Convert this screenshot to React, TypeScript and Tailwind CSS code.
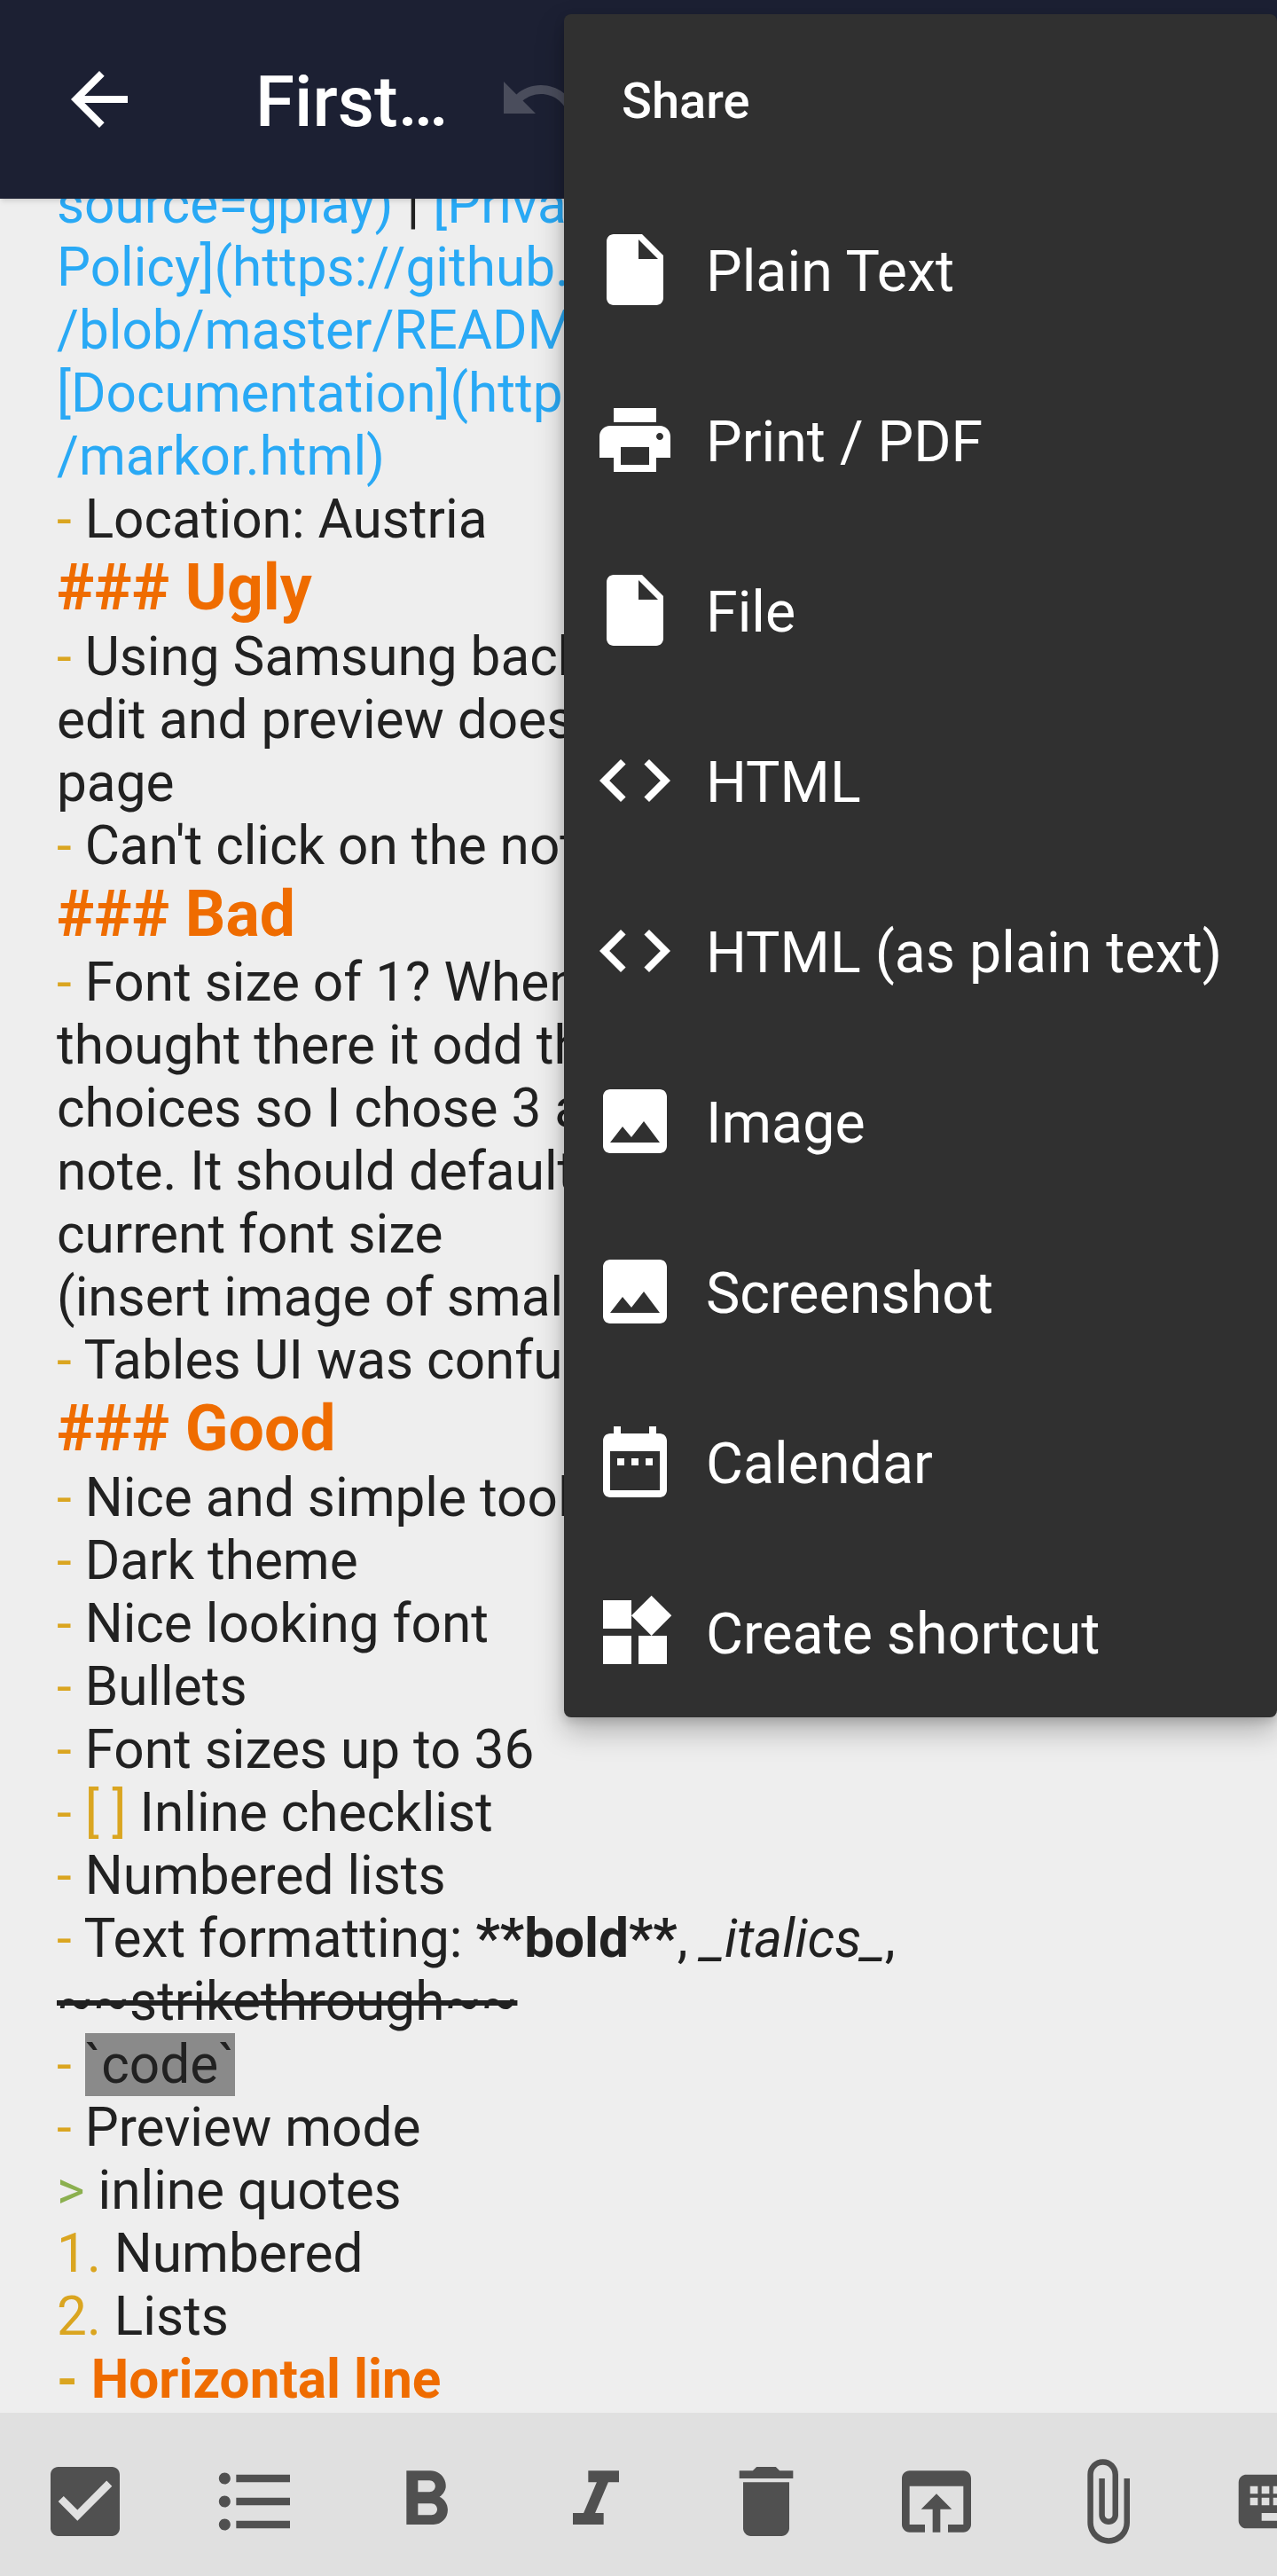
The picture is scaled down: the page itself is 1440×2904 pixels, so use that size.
import React from "react";

const ROBOTO = "font-['Roboto',sans-serif]";

// Material icon paths, all on a 24 unit grid
const icons = {
  back: "M20 11H7.83l5.59-5.59L12 4l-8 8 8 8 1.41-1.41L7.83 13H20v-2z",
  undo: "M12.5 8c-2.65 0-5.05.99-6.9 2.6L2 7v9h9l-3.62-3.62c1.39-1.16 3.16-1.88 5.12-1.88 3.54 0 6.55 2.31 7.6 5.5l2.37-.78C21.08 11.03 17.15 8 12.5 8z",
  file: "M6 2c-1.1 0-1.99.9-1.99 2L4 20c0 1.1.89 2 1.99 2H18c1.1 0 2-.9 2-2V8l-6-6H6zm7 7V3.5L18.5 9H13z",
  print: "M19 8H5c-1.66 0-3 1.34-3 3v6h4v4h12v-4h4v-6c0-1.66-1.34-3-3-3zm-3 11H8v-5h8v5zm3-7c-.55 0-1-.45-1-1s.45-1 1-1 1 .45 1 1-.45 1-1 1zm-1-9H6v4h12V3z",
  code: "M9.4 16.6L4.8 12l4.6-4.6L8 6l-6 6 6 6 1.4-1.4zm5.2 0l4.6-4.6-4.6-4.6L16 6l6 6-6 6-1.4-1.4z",
  image: "M21 19V5c0-1.1-.9-2-2-2H5c-1.1 0-2 .9-2 2v14c0 1.1.9 2 2 2h14c1.1 0 2-.9 2-2zM8.5 13.5l2.5 3.01L14.5 12l4.5 6H5l3.5-4.5z",
  calendar: "M9 11H7v2h2v-2zm4 0h-2v2h2v-2zm4 0h-2v2h2v-2zm2-7h-1V2h-2v2H8V2H6v2H5c-1.11 0-1.99.9-1.99 2L3 20c0 1.1.89 2 2 2h14c1.1 0 2-.9 2-2V6c0-1.1-.9-2-2-2zm0 16H5V9h14v11z",
  widgets: "M13 13v8h8v-8h-8zM3 21h8v-8H3v8zM3 3v8h8V3H3zm13.66-1.31L11 7.34 16.66 13l5.66-5.66-5.66-5.65z",
  checkBox: "M19 3H5c-1.11 0-2 .9-2 2v14c0 1.1.89 2 2 2h14c1.11 0 2-.9 2-2V5c0-1.1-.89-2-2-2zm-9 14l-5-5 1.41-1.41L10 14.17l7.59-7.59L19 8l-9 9z",
  list: "M4 10.5c-.83 0-1.5.67-1.5 1.5s.67 1.5 1.5 1.5 1.5-.67 1.5-1.5-.67-1.5-1.5-1.5zm0-6c-.83 0-1.5.67-1.5 1.5S3.17 7.5 4 7.5 5.5 6.83 5.5 6 4.83 4.5 4 4.5zm0 12c-.83 0-1.5.68-1.5 1.5s.68 1.5 1.5 1.5 1.5-.68 1.5-1.5-.67-1.5-1.5-1.5zM7 19h14v-2H7v2zm0-6h14v-2H7v2zm0-8v2h14V5H7z",
  bold: "M15.6 10.79c.97-.67 1.65-1.77 1.65-2.79 0-2.26-1.75-4-4-4H7v14h7.04c2.09 0 3.71-1.7 3.71-3.79 0-1.52-.86-2.82-2.15-3.42zM10 6.5h3c.83 0 1.5.67 1.5 1.5s-.67 1.5-1.5 1.5h-3v-3zm3.5 9H10v-3h3.5c.83 0 1.5.67 1.5 1.5s-.67 1.5-1.5 1.5z",
  italic: "M10 4v3h2.21l-3.42 8H6v3h8v-3h-2.21l3.42-8H18V4z",
  trash: "M6 19c0 1.1.9 2 2 2h8c1.1 0 2-.9 2-2V7H6v12zM19 4h-3.5l-1-1h-5l-1 1H5v2h14V4z",
  openIn: "M19 4H5c-1.11 0-2 .9-2 2v12c0 1.1.89 2 2 2h4v-2H5V8h14v10h-4v2h4c1.1 0 2-.9 2-2V6c0-1.1-.89-2-2-2zm-7 6l-4 4h3v6h2v-6h3l-4-4z",
  attach: "M16.5 6v11.5c0 2.21-1.79 4-4 4s-4-1.79-4-4V5c0-1.38 1.12-2.5 2.5-2.5s2.5 1.12 2.5 2.5v10.5c0 .55-.45 1-1 1s-1-.45-1-1V6H10v9.5c0 1.38 1.12 2.5 2.5 2.5s2.5-1.12 2.5-2.5V5c0-2.21-1.79-4-4-4S7 2.79 7 5v12.5c0 3.04 2.46 5.5 5.5 5.5s5.5-2.46 5.5-5.5V6h-1.5z",
  keyboard: "M20 5H4c-1.1 0-1.99.9-1.99 2L2 17c0 1.1.9 2 2 2h16c1.1 0 2-.9 2-2V7c0-1.1-.9-2-2-2zm-9 3h2v2h-2V8zm0 3h2v2h-2v-2zM8 8h2v2H8V8zm0 3h2v2H8v-2zm-1 2H5v-2h2v2zm0-3H5V8h2v2zm9 7H8v-2h8v2zm0-4h-2v-2h2v2zm0-3h-2V8h2v2zm3 3h-2v-2h2v2zm0-3h-2V8h2v2z",
};

const Icon = ({ d, className }: { d: string; className: string }) => (
  <svg viewBox="0 0 24 24" fill="currentColor" className={className}>
    <path d={d} />
  </svg>
);

const Line = ({ children }: { children: React.ReactNode }) => (
  <div className="h-[71px] leading-[71px] whitespace-nowrap">{children}</div>
);

const Heading = ({ children }: { children: React.ReactNode }) => (
  <div className="h-[83.5px] leading-[83.5px] whitespace-nowrap text-[71.5px] font-bold text-[#ef6c00]">
    {children}
  </div>
);

const Dash = () => <span className="text-[#daa520]">- </span>;

const Item = ({ children }: { children: React.ReactNode }) => (
  <Line>
    <Dash />
    {children}
  </Line>
);

const Link = ({ children }: { children: React.ReactNode }) => (
  <span className="text-[#29a9f5]">{children}</span>
);

const menuItems = [
  { icon: icons.file, label: "Plain Text" },
  { icon: icons.print, label: "Print / PDF" },
  { icon: icons.file, label: "File" },
  { icon: icons.code, label: "HTML" },
  { icon: icons.code, label: "HTML (as plain text)" },
  { icon: icons.image, label: "Image" },
  { icon: icons.image, label: "Screenshot" },
  { icon: icons.calendar, label: "Calendar" },
  { icon: icons.widgets, label: "Create shortcut" },
];

const toolbar = [
  icons.checkBox,
  icons.list,
  icons.bold,
  icons.italic,
  icons.trash,
  icons.openIn,
  icons.attach,
  icons.keyboard,
];

export default function App() {
  return (
    <div className={`relative flex h-[2904px] w-[1440px] flex-col overflow-hidden bg-[#eeeeee] ${ROBOTO}`}>
      <header className="relative z-10 flex h-[224px] shrink-0 items-center bg-[#1c2033] shadow-md">
        <div className="flex w-[224px] shrink-0 justify-center">
          <Icon d={icons.back} className="h-24 w-24 text-white" />
        </div>
        <h1 className="w-[336px] shrink-0 pl-[64px] pt-[5px] text-[80px] font-medium leading-none text-white">First…</h1>
        <Icon d={icons.undo} className="h-24 w-24 text-white opacity-20" />
      </header>

      <main className="min-h-0 flex-1 overflow-hidden pl-[64px] text-[60.3px] text-[#212121]">
        <div className="mt-[-29px]">
          <Line><Link>source=gplay)</Link> | <Link>[Privacy</Link></Line>
          <Line><Link>Policy](https://github.</Link></Line>
          <Line><Link>/blob/master/README</Link></Line>
          <Line><Link>[Documentation](http</Link></Line>
          <Line><Link>/markor.html)</Link></Line>
          <Item>Location: Austria</Item>
          <Heading>### Ugly</Heading>
          <Item>Using Samsung back</Item>
          <Line>edit and preview does</Line>
          <Line>page</Line>
          <Item>Can't click on the note</Item>
          <Heading>### Bad</Heading>
          <Item>Font size of 1? When</Item>
          <Line>thought there it odd th</Line>
          <Line>choices so I chose 3 a</Line>
          <Line>note. It should default</Line>
          <Line>current font size</Line>
          <Line>(insert image of small</Line>
          <Item>Tables UI was confus</Item>
          <Heading>### Good</Heading>
          <Item>Nice and simple tool</Item>
          <Item>Dark theme</Item>
          <Item>Nice looking font</Item>
          <Item>Bullets</Item>
          <Item>Font sizes up to 36</Item>
          <Item><span className="text-[#daa520]">[ ]</span> Inline checklist</Item>
          <Item>Numbered lists</Item>
          <Item>
            Text formatting: <b>**bold**</b>, <i>_italics_</i>,
          </Item>
          <Line><span className="line-through">~~strikethrough~~</span></Line>
          <Item><span className="bg-[#8a8a8a]">`code`</span></Item>
          <Item>Preview mode</Item>
          <Line><span className="text-[#8bb04f]">&gt;</span> inline quotes</Line>
          <Line><span className="text-[#daa520]">1.</span> Numbered</Line>
          <Line><span className="text-[#daa520]">2.</span> Lists</Line>
          <Line>
            <span className="font-bold text-[#daa520]">- </span>
            <span className="font-bold text-[#ef6c00]">Horizontal line</span>
          </Line>
        </div>
      </main>

      <footer className="flex h-[184px] shrink-0 items-center bg-[#e0e0e0] pt-4 text-[#505050]">
        {toolbar.map((d, i) => (
          <div key={i} className="flex w-[192px] shrink-0 justify-center">
            <Icon d={d} className="h-[104px] w-[104px]" />
          </div>
        ))}
      </footer>

      <div className="absolute left-[636px] top-4 z-20 w-[804px] rounded-lg bg-[#303030] text-white shadow-[0_16px_32px_rgba(0,0,0,0.25),0_4px_12px_rgba(0,0,0,0.15)]">
        <div className="flex h-[192px] items-center pl-[65px] pt-[3px] text-[56px] font-medium">Share</div>
        {menuItems.map((item) => (
          <div key={item.label} className="flex h-[192px] items-center pl-[32px]">
            <Icon d={item.icon} className="h-24 w-24 shrink-0" />
            <span className="ml-[32px] pt-[4px] text-[64.5px]">{item.label}</span>
          </div>
        ))}
      </div>
    </div>
  );
}
